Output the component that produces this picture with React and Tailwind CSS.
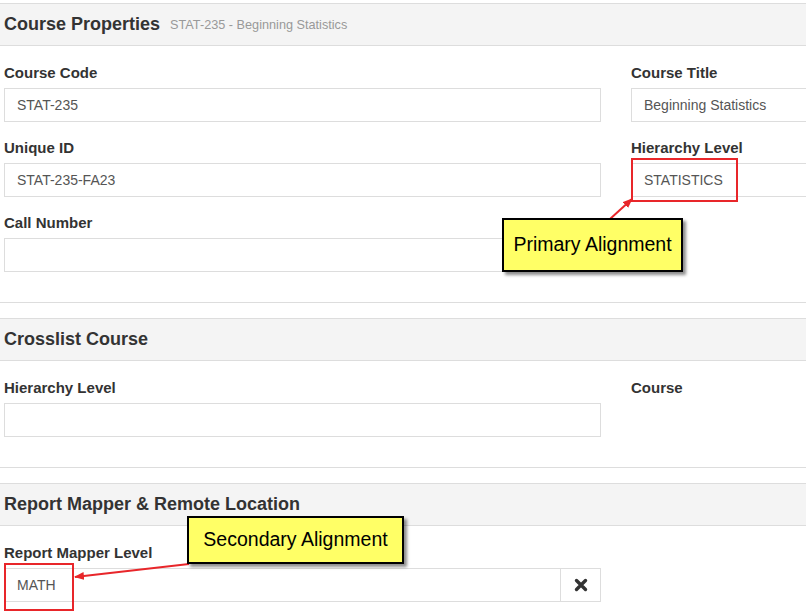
import React from "react";

function Label({ children }) {
  return (
    <div className="text-[15px] leading-[20px] font-bold text-[#333] mb-[5px]">{children}</div>
  );
}

function Input({ value, className = "" }) {
  return (
    <div
      className={
        "h-[34px] border border-[#ddd] bg-white px-[12px] flex items-center text-[14px] text-[#555] " +
        className
      }
    >
      {value}
    </div>
  );
}

function Field({ label, value, last }) {
  return (
    <div className={last ? "" : "mb-[16px]"}>
      <Label>{label}</Label>
      <Input value={value} />
    </div>
  );
}

function Header({ title, sub }) {
  return (
    <div className="h-[43px] border-y border-[#ddd] bg-[#f4f4f4] flex items-center px-[4px] gap-[10px]">
      <span className="text-[18px] font-bold text-[#333]">{title}</span>
      {sub && <span className="text-[12.7px] text-[#999] mt-[2px]">{sub}</span>}
    </div>
  );
}

function Row({ left, right }) {
  return (
    <div className="flex">
      <div className="w-[597px] shrink-0">{left}</div>
      <div className="w-[298px] shrink-0 ml-[30px]">{right}</div>
    </div>
  );
}

function TimesIcon() {
  return (
    <svg width="14" height="14" viewBox="0 0 14 14">
      <path d="M2.5 2.5 L11.5 11.5 M11.5 2.5 L2.5 11.5" stroke="#333" strokeWidth="3.4" strokeLinecap="round" />
    </svg>
  );
}

export default function App() {
  return (
    <div
      className="relative w-[806px] h-[616px] overflow-hidden bg-white pt-[3px]"
      style={{ fontFamily: '"Liberation Sans", Arial, sans-serif' }}
    >
      {/* Course Properties */}
      <div className="border-b border-[#ddd] mb-[15px]">
        <Header title="Course Properties" sub="STAT-235 - Beginning Statistics" />
        <div className="px-[4px] pt-[17px] pb-[14px]">
          <Row
            left={<Field label="Course Code" value="STAT-235" />}
            right={<Field label="Course Title" value="Beginning Statistics" />}
          />
          <Row
            left={<Field label="Unique ID" value="STAT-235-FA23" />}
            right={<Field label="Hierarchy Level" value="STATISTICS" />}
          />
          <Row left={<Field label="Call Number" value="" />} right={null} />
        </div>
      </div>

      {/* Crosslist Course */}
      <div className="border-b border-[#ddd] mb-[15px]">
        <Header title="Crosslist Course" />
        <div className="px-[4px] pt-[17px] pb-[14px]">
          <Row
            left={<Field label="Hierarchy Level" value="" />}
            right={<Label>Course</Label>}
          />
        </div>
      </div>

      {/* Report Mapper */}
      <div>
        <Header title="Report Mapper & Remote Location" />
        <div className="px-[4px] pt-[17px]">
          <Row
            left={
              <div>
                <Label>Report Mapper Level</Label>
                <div className="flex">
                  <Input value="MATH" className="flex-1" />
                  <div className="w-[40px] h-[34px] border border-l-0 border-[#ddd] flex items-center justify-center">
                    <TimesIcon />
                  </div>
                </div>
              </div>
            }
            right={null}
          />
        </div>
      </div>

      {/* Red highlight boxes */}
      <div className="absolute left-[631px] top-[158px] w-[107px] h-[44px] border-2 border-[#e8262a]" />
      <div className="absolute left-[4px] top-[563px] w-[70px] h-[48px] border-2 border-[#e8262a]" />

      {/* Arrows */}
      <svg className="absolute left-0 top-0" width="806" height="616">
        <defs>
          <marker id="ah" markerWidth="10" markerHeight="8" refX="9" refY="4" orient="auto" markerUnits="userSpaceOnUse">
            <path d="M0,0 L10,4 L0,8 Z" fill="#e8262a" />
          </marker>
        </defs>
        <line x1="610" y1="219" x2="632" y2="199" stroke="#e8262a" strokeWidth="2" markerEnd="url(#ah)" />
        <line x1="189" y1="564" x2="75" y2="577" stroke="#e8262a" strokeWidth="2" markerEnd="url(#ah)" />
      </svg>

      {/* Callouts */}
      <div
        className="absolute left-[502px] top-[218px] w-[181px] h-[54px] bg-[#ffff66] border-2 border-black flex items-center justify-center text-[19.5px] text-black"
        style={{ boxShadow: "3px 3px 3px rgba(0,0,0,0.45)" }}
      >
        Primary Alignment
      </div>
      <div
        className="absolute left-[187px] top-[516px] w-[217px] h-[48px] bg-[#ffff66] border-2 border-black flex items-center justify-center text-[19.5px] text-black"
        style={{ boxShadow: "3px 3px 3px rgba(0,0,0,0.45)" }}
      >
        Secondary Alignment
      </div>
    </div>
  );
}
